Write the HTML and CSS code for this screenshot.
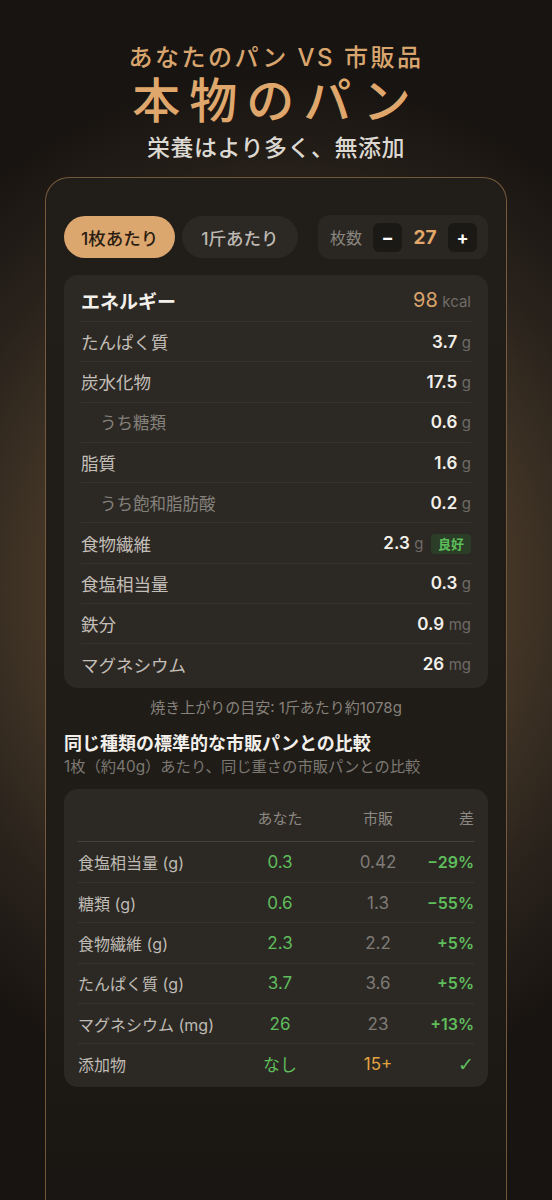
FILE: index.html
```html
<!DOCTYPE html>
<html lang="ja">
<head>
<meta charset="UTF-8" />
<meta name="viewport" content="width=device-width, initial-scale=1" />
<title>本物のパン</title>
<link rel="stylesheet" href="styles.css">
</head>
<body>

<header class="hero">
  <div class="hero-kicker">あなたのパン VS 市販品</div>
  <h1 class="hero-title">本物のパン</h1>
  <p class="hero-sub">栄養はより多く、無添加</p>
</header>

<main class="card">
  <div class="toolbar">
    <button class="pill active">1枚あたり</button>
    <button class="pill">1斤あたり</button>
    <div class="counter">
      <span class="counter-label">枚数</span>
      <button class="step">−</button>
      <span class="counter-value">27</span>
      <button class="step">+</button>
    </div>
  </div>

  <section class="panel nutrition">
    <div class="row energy">
      <span class="label">エネルギー</span>
      <span class="value"><b>98</b> <small>kcal</small></span>
    </div>
    <div class="row"><span class="label">たんぱく質</span><span class="value"><b>3.7</b> <small>g</small></span></div>
    <div class="row"><span class="label">炭水化物</span><span class="value"><b>17.5</b> <small>g</small></span></div>
    <div class="row sub"><span class="label">うち糖類</span><span class="value"><b>0.6</b> <small>g</small></span></div>
    <div class="row"><span class="label">脂質</span><span class="value"><b>1.6</b> <small>g</small></span></div>
    <div class="row sub"><span class="label">うち飽和脂肪酸</span><span class="value"><b>0.2</b> <small>g</small></span></div>
    <div class="row"><span class="label">食物繊維</span><span class="value"><b>2.3</b> <small>g</small> <em class="badge">良好</em></span></div>
    <div class="row"><span class="label">食塩相当量</span><span class="value"><b>0.3</b> <small>g</small></span></div>
    <div class="row"><span class="label">鉄分</span><span class="value"><b>0.9</b> <small>mg</small></span></div>
    <div class="row"><span class="label">マグネシウム</span><span class="value"><b>26</b> <small>mg</small></span></div>
  </section>

  <p class="note">焼き上がりの目安: 1斤あたり約1078g</p>

  <h2 class="section-title">同じ種類の標準的な市販パンとの比較</h2>
  <p class="section-sub">1枚（約40g）あたり、同じ重さの市販パンとの比較</p>

  <section class="panel compare">
    <div class="crow head">
      <span></span><span>あなた</span><span>市販</span><span>差</span>
    </div>
    <div class="crow"><span>食塩相当量 (g)</span><span class="you">0.3</span><span class="shop">0.42</span><span class="diff">−29%</span></div>
    <div class="crow"><span>糖類 (g)</span><span class="you">0.6</span><span class="shop">1.3</span><span class="diff">−55%</span></div>
    <div class="crow"><span>食物繊維 (g)</span><span class="you">2.3</span><span class="shop">2.2</span><span class="diff">+5%</span></div>
    <div class="crow"><span>たんぱく質 (g)</span><span class="you">3.7</span><span class="shop">3.6</span><span class="diff">+5%</span></div>
    <div class="crow"><span>マグネシウム (mg)</span><span class="you">26</span><span class="shop">23</span><span class="diff">+13%</span></div>
    <div class="crow"><span>添加物</span><span class="you">なし</span><span class="shop warn">15+</span><span class="diff check">✓</span></div>
  </section>
</main>

</body>
</html>
```

FILE: styles.css
```css
/* Reset and base */
* {
  box-sizing: border-box;
  margin: 0;
  padding: 0;
}
body {
  font-family: Inter, 'Noto Sans CJK JP', sans-serif;
  color: #e8e4de;
  min-height: 1200px;
  overflow: hidden;
  background:
    radial-gradient(ellipse 85% 42% at 50% 48%, #5e4c33 0%, #4d3d2b 40%, #2a231c 75%, #181411 100%),
    #16130f;
}

/* Header */
.hero {
  text-align: center;
  padding-top: 43px;
}
.hero-kicker {
  font-size: 24px;
  font-weight: 500;
  letter-spacing: 2.5px;
  color: #d9a56e;
  line-height: 30px;
}
.hero-title {
  font-size: 48px;
  font-weight: 500;
  letter-spacing: 9px;
  color: #dfa76c;
  line-height: 56px;
}
.hero-sub {
  font-size: 23px;
  font-weight: 500;
  letter-spacing: 0.5px;
  color: #dcd8d2;
  line-height: 30px;
  margin-top: 4px;
}

/* Main card */
.card {
  margin: 14px 45px 0;
  padding: 37px 18px 140px;
  border: 1px solid rgba(190, 140, 90, 0.55);
  border-bottom: none;
  border-radius: 24px 24px 0 0;
  background: linear-gradient(180deg, #211e1a 0%, #1f1c18 70%, #181512 100%);
}

/* Tabs + counter */
.toolbar {
  display: flex;
  align-items: center;
  gap: 7px;
}
.pill {
  font-family: inherit;
  font-size: 17.5px;
  font-weight: 500;
  height: 42px;
  padding: 0 17px;
  border: none;
  border-radius: 21px;
  background: #2c2925;
  color: #bdb8b1;
}
.pill.active {
  background: #dca66f;
  color: #2b1e11;
}
.pill + .pill {
  padding: 0 19px;
}
.counter {
  margin-left: auto;
  display: flex;
  align-items: center;
  height: 44px;
  padding: 0 11px 0 12px;
  border-radius: 12px;
  background: #2a2723;
}
.counter-label {
  font-size: 16px;
  color: #88847e;
  margin-right: 11px;
}
.step {
  width: 29px;
  height: 29px;
  border: none;
  border-radius: 6px;
  background: #1b1916;
  color: #fff;
  font-family: inherit;
  font-size: 18px;
  font-weight: 700;
}
.counter-value {
  width: 46px;
  text-align: center;
  font-size: 19px;
  font-weight: 700;
  color: #e3a769;
}

/* Panels */
.panel {
  background: #2c2925;
  border-radius: 14px;
}
.nutrition {
  margin-top: 16px;
  padding: 4px 17px 4px;
}
.row {
  display: flex;
  align-items: center;
  justify-content: space-between;
  height: 40.3px;
  border-top: 1px solid #36332e;
}
.row:first-child {
  border-top: none;
}
.row .label {
  font-size: 17.5px;
  color: #c3beb7;
}
.row.sub .label {
  padding-left: 19px;
  font-size: 16.5px;
  color: #85817b;
}
.row .value b {
  font-size: 17px;
  font-weight: 600;
  color: #f3f0ea;
}
.row .value small {
  font-size: 15px;
  color: #6f6b65;
}
.row.energy {
  height: 42px;
}
.row.energy .label {
  font-size: 19px;
  font-weight: 700;
  color: #f4f1ec;
}
.row.energy .value b {
  font-size: 20px;
  font-weight: 400;
  color: #d9a46c;
}
.badge {
  font-style: normal;
  font-size: 13px;
  font-weight: 700;
  color: #5cbd5a;
  background: #2b3d27;
  border-radius: 4px;
  padding: 2px 7px;
  margin-left: 3px;
}

.note {
  text-align: center;
  font-size: 15px;
  color: #86817a;
  margin-top: 8px;
}
.section-title {
  font-size: 18px;
  font-weight: 700;
  color: #f3f0eb;
  margin-top: 14px;
  line-height: 25px;
}
.section-sub {
  font-size: 15.3px;
  color: #7c7872;
  line-height: 21px;
}

/* Comparison table */
.compare {
  margin-top: 12px;
  padding: 6px 14px 4px 14px;
}
.crow {
  display: grid;
  grid-template-columns: 1fr 98px 98px 47px;
  align-items: center;
  height: 40.3px;
  font-size: 16px;
  color: #bfbab3;
  border-top: 1px solid #36332e;
}
.crow span:nth-child(2),
.crow span:nth-child(3) {
  text-align: center;
}
.crow span:nth-child(4) {
  text-align: right;
}
.crow.head {
  height: 47px;
  border-top: none;
  border-bottom: 1px solid #47433d;
  font-size: 15px;
  color: #8c8882;
}
.crow.head + .crow {
  border-top: none;
}
.crow .you {
  font-size: 17px;
  color: #5fbd5b;
}
.crow .shop {
  font-size: 17px;
  color: #7f7b75;
}
.crow .shop.warn {
  color: #e3a442;
}
.crow .diff {
  font-size: 16px;
  font-weight: 600;
  color: #5fbd5b;
}
.crow .diff.check {
  font-family: 'DejaVu Sans', sans-serif;
  font-weight: 400;
  font-size: 19px;
}
```
